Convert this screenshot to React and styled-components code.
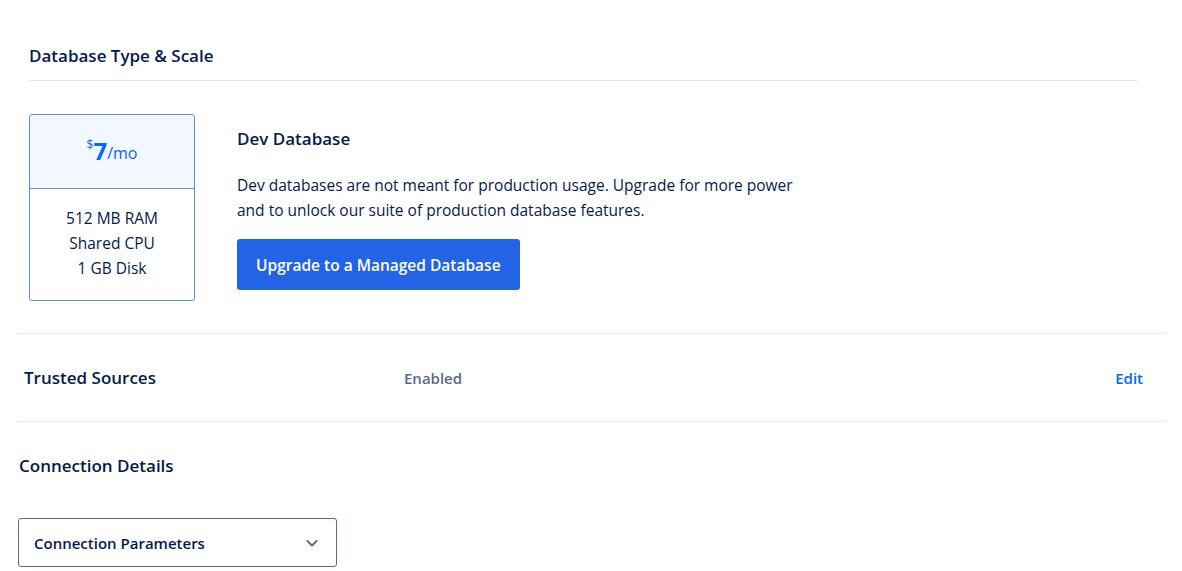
import React from 'react'
import styled, { createGlobalStyle } from 'styled-components'

const GlobalStyle = createGlobalStyle`
  body {
    margin: 0;
    background: #fff;
    font-family: 'Open Sans', 'Liberation Sans', sans-serif;
    color: #031b4e;
  }
`

const navy = '#031b4e'
const blue = '#0069ff'
const line = '#e6e9ef'

const Page = styled.div`
  width: 1148px;
  padding-left: 17px;
`

const ScaleSection = styled.section`
  padding: 44px 27px 32px 12px;
  border-bottom: 1px solid ${line};
`

const SectionTitle = styled.h2`
  margin: 0;
  font-size: 17px;
  font-weight: 600;
  line-height: 24px;
  color: ${navy};
  padding-left: ${({ indent }) => indent || 0}px;
`

const TitleBar = styled.div`
  padding-bottom: 12px;
  border-bottom: 1px solid ${line};
`

const PlanRow = styled.div`
  display: flex;
  gap: 42px;
  margin-top: 33px;
`

const PlanCard = styled.div`
  width: 164px;
  height: 185px;
  border: 1px solid #5a8ef0;
  border-radius: 3px;
  display: flex;
  flex-direction: column;
  overflow: hidden;
`

const PlanPrice = styled.div`
  height: 71px;
  background: #f3f7ff;
  border-bottom: 1px solid #5a8ef0;
  display: flex;
  justify-content: center;
  align-items: center;
  color: ${blue};
  padding-bottom: 2px;
`

const Currency = styled.sup`
  font-size: 12px;
  align-self: flex-start;
  margin-top: 24px;
  line-height: 1;
`

const Amount = styled.span`
  font-size: 24px;
  font-weight: 700;
  line-height: 1;
`

const Per = styled.span`
  font-size: 16px;
  line-height: 1;
  margin-top: 4px;
`

const PlanSpecs = styled.div`
  flex: 1;
  display: flex;
  flex-direction: column;
  justify-content: center;
  align-items: center;
  font-size: 15.5px;
  line-height: 25px;
  color: ${navy};
  padding-bottom: 2px;
`

const PlanInfo = styled.div`
  padding-top: 13px;
`

const InfoTitle = styled.h3`
  margin: 0 0 22px;
  font-size: 17px;
  font-weight: 600;
  line-height: 24px;
  color: ${navy};
`

const InfoText = styled.p`
  margin: 0 0 16px;
  width: 580px;
  font-size: 15.5px;
  line-height: 25px;
  color: ${navy};
`

const PrimaryButton = styled.button`
  height: 51px;
  padding: 0 19px;
  border: 0;
  border-radius: 3px;
  background: #2264e5;
  color: #fff;
  font-family: inherit;
  font-size: 15.5px;
  font-weight: 600;
  cursor: pointer;
`

const SettingRow = styled.div`
  display: flex;
  align-items: center;
  height: 87px;
  padding: 0 22px 0 7px;
  border-bottom: 1px solid ${line};
`

const SettingLabel = styled.div`
  width: 380px;
  font-size: 17px;
  font-weight: 600;
  color: ${navy};
`

const SettingValue = styled.div`
  flex: 1;
  font-size: 15px;
  font-weight: 600;
  color: #5b6987;
`

const TextLink = styled.a`
  font-size: 15px;
  font-weight: 600;
  color: ${blue};
  text-decoration: none;
  cursor: pointer;
`

const ConnectionSection = styled.section`
  padding-top: 32px;
`

const Select = styled.button`
  margin-top: 40px;
  margin-left: 1px;
  width: 319px;
  height: 49px;
  display: flex;
  align-items: center;
  justify-content: space-between;
  padding: 0 15px;
  background: #fff;
  border: 1px solid #5b6987;
  border-radius: 3px;
  font-family: inherit;
  font-size: 15px;
  font-weight: 600;
  color: ${navy};
  cursor: pointer;

  svg {
    width: 16px;
    height: 16px;
    margin-right: 1px;
  }
`

const Chevron = () => (
  <svg viewBox="0 0 16 16" fill="none" stroke="#5b6987" strokeWidth="2" strokeLinecap="round" strokeLinejoin="round">
    <path d="M3.5 6l4.5 4.5L12.5 6" />
  </svg>
)

const App = () => {
  return (
    <Page>
      <GlobalStyle />
      <ScaleSection>
        <TitleBar>
          <SectionTitle>Database Type &amp; Scale</SectionTitle>
        </TitleBar>
        <PlanRow>
          <PlanCard>
            <PlanPrice>
              <Currency>$</Currency>
              <Amount>7</Amount>
              <Per>/mo</Per>
            </PlanPrice>
            <PlanSpecs>
              <span>512 MB RAM</span>
              <span>Shared CPU</span>
              <span>1 GB Disk</span>
            </PlanSpecs>
          </PlanCard>
          <PlanInfo>
            <InfoTitle>Dev Database</InfoTitle>
            <InfoText>
              Dev databases are not meant for production usage. Upgrade for more power
              and to unlock our suite of production database features.
            </InfoText>
            <PrimaryButton>Upgrade to a Managed Database</PrimaryButton>
          </PlanInfo>
        </PlanRow>
      </ScaleSection>
      <SettingRow>
        <SettingLabel>Trusted Sources</SettingLabel>
        <SettingValue>Enabled</SettingValue>
        <TextLink>Edit</TextLink>
      </SettingRow>
      <ConnectionSection>
        <SectionTitle indent={2}>Connection Details</SectionTitle>
        <Select>
          <span>Connection Parameters</span>
          <Chevron />
        </Select>
      </ConnectionSection>
    </Page>
  )
}

export default App
